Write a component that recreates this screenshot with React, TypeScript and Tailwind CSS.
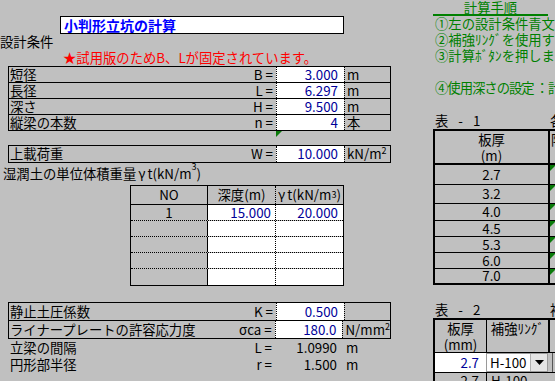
import clsx from 'clsx'
import type { ReactNode } from 'react'

const BLUE = 'text-[#000099]'

const DESIGN_ROWS = [
  { label: '短径', sym: 'B =', value: '3.000', unit: 'm' },
  { label: '長径', sym: 'L =', value: '6.297', unit: 'm' },
  { label: '深さ', sym: 'H =', value: '9.500', unit: 'm' },
  { label: '縦梁の本数', sym: 'n =', value: '4', unit: '本' },
]

const PLATE_ROWS = [
  { t: '2.7', h: 'h-[20px]' },
  { t: '3.2', h: 'h-[19px]' },
  { t: '4.0', h: 'h-[17px]' },
  { t: '4.5', h: 'h-[16px]' },
  { t: '5.3', h: 'h-[16px]' },
  { t: '6.0', h: 'h-[16px]' },
  { t: '7.0', h: 'h-[16px]' },
]

function Tri() {
  return (
    <svg width="6" height="6" viewBox="0 0 6 6" className="block">
      <polygon points="0,0 6,0 0,6" fill="#0a7a0a" />
    </svg>
  )
}

function Sup({ children }: { children: ReactNode }) {
  return <span className="text-[9px] align-top leading-[9px] relative -top-[1px]">{children}</span>
}

interface RowProps {
  label: ReactNode
  sym: string
  value: string
  unit?: ReactNode
  className?: string
}

// one bordered line of the parameter block: label | value | unit
function ParamRow({ label, sym, value, unit, className }: RowProps) {
  return (
    <div className={clsx('flex items-center', className)}>
      <div className="w-[267px] h-full flex items-center justify-between pl-[1px] pr-[3px]">
        <span>{label}</span>
        <span>{sym}</span>
      </div>
      <div className={clsx('w-[68px] h-full flex items-center justify-end pr-[6px] bg-white border-l border-dotted border-black', BLUE)}>
        {value}
      </div>
      <div className="flex-1 h-full flex items-center pl-[2px] border-l border-dotted border-black">{unit}</div>
    </div>
  )
}

function LeftSheet() {
  return (
    <div className="w-[433px] shrink-0">
      <div className="h-[16px]" />
      <div className="ml-[60px] w-[284px] h-[18px] bg-white border border-black pl-[3px] text-[14px] leading-[16px] font-bold text-[#0000ff]">
        小判形立坑の計算
      </div>
      <div className="h-[16px] leading-[16px]">設計条件</div>
      <div className="h-[16px] leading-[16px] ml-[63px] text-[#ff0000]">★試用版のためB、Lが固定されています。</div>

      {/* design conditions */}
      <div className="ml-[8px] w-[383px] border-x border-b border-black">
        {DESIGN_ROWS.map((r) => (
          <ParamRow key={r.label} {...r} className="h-[16px] border-t border-black" />
        ))}
      </div>
      <div className="h-[14px] pl-[276px]">
        <Tri />
      </div>

      <div className="ml-[8px] w-[383px] h-[18px] border border-black">
        <ParamRow
          label="上載荷重"
          sym="W ="
          value="10.000"
          unit={<span>kN/m<Sup>2</Sup></span>}
          className="h-full"
        />
      </div>

      <div className="h-[22px] leading-[22px] pl-[3px]">
        湿潤土の単位体積重量<span className="mx-[2px]">γ</span>t(kN/m<Sup>3</Sup>)
      </div>

      {/* unit weight table */}
      <div className="ml-[130px] w-[214px] border border-black">
        <div className="flex h-[19px] border-b border-black">
          <div className="w-[76px] flex items-center justify-center">NO</div>
          <div className="w-[68px] flex items-center justify-center border-l border-black">深度(m)</div>
          <div className="flex-1 flex items-center justify-center border-l border-dotted border-black">
            <span className="mr-[2px]">γ</span>t(kN/m<Sup>3</Sup>)
          </div>
        </div>
        {[0, 1, 2, 3, 4].map((i) => (
          <div key={i} className={clsx('flex h-[16px]', i < 4 && 'border-b border-dotted border-black')}>
            <div className="w-[76px] flex items-center justify-center">{i === 0 ? '1' : ''}</div>
            <div className={clsx('w-[68px] flex items-center justify-end pr-[4px] bg-white border-l border-black', BLUE)}>
              {i === 0 ? '15.000' : ''}
            </div>
            <div className={clsx('flex-1 flex items-center justify-end pr-[5px] bg-white border-l border-dotted border-black', BLUE)}>
              {i === 0 ? '20.000' : ''}
            </div>
          </div>
        ))}
      </div>

      <div className="h-[16px]" />
      <div className="ml-[8px] w-[383px] border-x border-b border-black">
        <ParamRow label="静止土圧係数" sym="K =" value="0.500" className="h-[18px] border-t border-black" />
        <ParamRow
          label="ライナープレートの許容応力度"
          sym="σca ="
          value="180.0"
          unit={<span>N/mm<Sup>2</Sup></span>}
          className="h-[18px] border-t border-black"
        />
      </div>

      <div className="ml-[8px] w-[383px] flex h-[17px] items-center">
        <div className="w-[267px] flex justify-between pl-[2px] pr-[3px]">
          <span>立梁の間隔</span>
          <span>L =</span>
        </div>
        <div className="w-[68px] text-right pr-[6px]">1.0990</div>
        <div className="pl-[3px]">m</div>
      </div>
      <div className="ml-[8px] w-[383px] flex h-[18px] items-center">
        <div className="w-[267px] flex justify-between pl-[2px] pr-[3px]">
          <span>円形部半径</span>
          <span>r =</span>
        </div>
        <div className="w-[68px] text-right pr-[6px]">1.500</div>
        <div className="pl-[3px]">m</div>
      </div>
    </div>
  )
}

function TableTitle({ n, side }: { n: string; side: string }) {
  return (
    <div className="h-[16px] leading-[16px] flex whitespace-nowrap">
      <div className="w-[117px] pl-[2px]">
        <span>表</span>
        <span className="ml-[10px]">-</span>
        <span className="ml-[10px]">{n}</span>
      </div>
      <span>{side}</span>
    </div>
  )
}

function RightSheet() {
  return (
    <div className="w-[200px] shrink-0">
      <div className="w-[115px] h-[16px] leading-[16px] text-center text-[#008000] border-b-2 border-[#008000]">
        計算手順
      </div>
      <div className="text-[#008000] leading-[16px] whitespace-nowrap pl-[2px]">
        <div className="h-[16px]">①左の設計条件青文字を入力します。</div>
        <div className="h-[16px]">②補強ﾘﾝｸﾞを使用する場合は</div>
        <div className="h-[16px]">③計算ﾎﾞﾀﾝを押します。</div>
        <div className="h-[16px]" />
        <div className="h-[16px] tracking-[-1px]">④使用深さの設定 ：計算</div>
      </div>

      <div className="h-[17px]" />
      <TableTitle n="1" side="各" />

      {/* table 1 */}
      <div className="flex h-[36px]">
        <div className="w-[117px] border-2 border-black flex flex-col items-center">
          <div className="h-[18px] leading-[18px]">板厚</div>
          <div className="h-[14px] leading-[14px]">(m)</div>
        </div>
        <div className="w-[80px] border-y-2 border-black pl-[1px] leading-[18px]">限界</div>
      </div>
      {PLATE_ROWS.map((r, i) => {
        const last = i === PLATE_ROWS.length - 1
        return (
          <div key={r.t} className={clsx('flex', r.h)}>
            <div
              className={clsx(
                'w-[117px] border-x-2 border-black flex items-center justify-center',
                last ? 'border-b-2' : 'border-b'
              )}
            >
              {r.t}
            </div>
            <div className={clsx('w-[80px] border-black', last ? 'border-b-2' : 'border-b')}>
              <Tri />
            </div>
          </div>
        )
      })}

      <div className="h-[17px]" />
      <TableTitle n="2" side="補" />

      {/* table 2 */}
      <div className="flex h-[35px] border-t-2 border-b border-black">
        <div className="w-[53px] border-l-2 border-black flex flex-col items-center">
          <div className="h-[18px] leading-[18px]">板厚</div>
          <div className="h-[14px] leading-[14px]">(mm)</div>
        </div>
        <div className="w-[62px] border-l border-black flex justify-center leading-[18px]">補強ﾘﾝｸﾞ</div>
        <div className="w-[80px] border-l-2 border-black" />
      </div>
      <div className="flex h-[20px] border-b border-black">
        <div className={clsx('w-[53px] border-l-2 border-black bg-white flex items-center justify-end pr-[7px]', BLUE)}>
          2.7
        </div>
        <div className="w-[62px] h-[19px] flex bg-white border border-[#9a9a9a]">
          <div className="flex-1 flex items-center pl-[3px]">H-100</div>
          <div className="w-[17px] bg-[#e4e4e4] border-l border-[#b0b0b0] flex items-center justify-center">
            <svg width="9" height="5" viewBox="0 0 9 5">
              <polygon points="0,0 9,0 4.5,5" fill="#000" />
            </svg>
          </div>
        </div>
        <div className="w-[80px] pl-[4px]">
          <div className="w-px h-full bg-[#555]" />
        </div>
      </div>
      <div className="flex h-[16px]">
        <div className="w-[53px] border-l-2 border-black flex items-center justify-end pr-[7px]">2.7</div>
        <div className="w-[62px] border-l border-black flex items-center pl-[4px]">H-100</div>
      </div>
    </div>
  )
}

export default function App() {
  return (
    <div className="w-[555px] h-[381px] overflow-hidden bg-[#c0c0c0] flex text-black text-[13.33px] leading-none font-['Noto_Sans_CJK_JP','Noto_Sans',sans-serif]">
      <LeftSheet />
      <RightSheet />
    </div>
  )
}
